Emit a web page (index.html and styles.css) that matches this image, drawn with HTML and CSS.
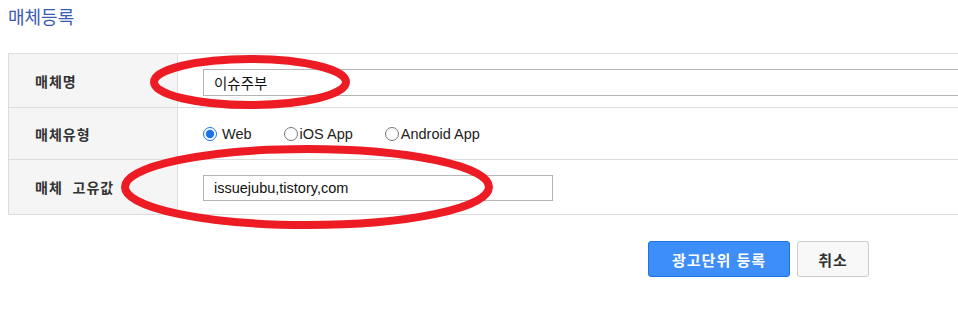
FILE: index.html
```html
<!DOCTYPE html>
<html>
<head>
    <meta charset="utf-8">
    <title>매체등록</title>
    <link rel="stylesheet" href="styles.css">
</head>
<body>
    <div class="page">
        <h2 class="page-title">매체등록</h2>

        <table class="form-table">
            <colgroup>
                <col class="col-label">
                <col>
            </colgroup>
            <tr class="row-name">
                <th>매체명</th>
                <td><input class="input-wide" type="text" value="이슈주부"></td>
            </tr>
            <tr class="row-type">
                <th>매체유형</th>
                <td>
                    <div class="radio-group">
                        <label class="radio-item"><input type="radio" name="media-type" checked>Web</label>
                        <label class="radio-item"><input type="radio" name="media-type">iOS App</label>
                        <label class="radio-item"><input type="radio" name="media-type">Android App</label>
                    </div>
                </td>
            </tr>
            <tr class="row-key">
                <th>매체&nbsp;&nbsp;고유값</th>
                <td><input class="input-mid" type="text" value="issuejubu,tistory,com"></td>
            </tr>
        </table>

        <div class="form-actions">
            <button class="btn btn-primary">광고단위 등록</button>
            <button class="btn btn-cancel">취소</button>
        </div>

        <!-- 빨간 표시 (주석) -->
        <svg class="marks" width="958" height="321" viewBox="0 0 958 321">
            <ellipse cx="250" cy="82" rx="96" ry="23" fill="none" stroke="#ed1c24" stroke-width="8"/>
            <ellipse cx="307" cy="187" rx="182" ry="38" fill="none" stroke="#ed1c24" stroke-width="8"/>
        </svg>
    </div>
</body>
</html>
```

FILE: styles.css
```css
body {
    margin: 0;
    padding: 0;
    background: #fff;
    color: #333;
    font-family: "Liberation Sans", "Noto Sans CJK KR", sans-serif;
    font-size: 14px;
    overflow: hidden;
}
.page {
    position: relative;
    width: 958px;
    height: 321px;
    padding: 8px 0 0 8px;
    box-sizing: border-box;
}
.page-title {
    margin: 0;
    font-size: 18px;
    line-height: 20px;
    font-weight: normal;
    color: #3a5cb4;
}
.form-table {
    margin-top: 25px;
    width: 990px;
    border-collapse: collapse;
    table-layout: fixed;
}
.col-label {
    width: 169px;
}
.form-table th,
.form-table td {
    border: 1px solid #ddd;
    padding: 0;
}
.form-table th {
    padding-left: 26px;
    background: #f5f5f5;
    text-align: left;
    white-space: nowrap;
    font-size: 14px;
    font-weight: bold;
    letter-spacing: 1px;
    color: #333;
}
.form-table td {
    padding-left: 25px;
}
.row-name { height: 54px; }
.row-name td { padding-top: 3px; }
.row-type { height: 52px; }
.row-key { height: 55px; }
.row-key td { padding-top: 2px; }

.input-wide,
.input-mid {
    box-sizing: border-box;
    border: 1px solid #b5b5b5;
    font-family: "Liberation Sans", "Noto Sans CJK KR", sans-serif;
    font-size: 14.5px;
    color: #111;
    padding: 0 10px;
    outline: none;
    display: block;
}
.input-wide {
    width: 100%;
    height: 27px;
}
.input-mid {
    width: 350px;
    height: 26px;
}
.radio-group {
    display: flex;
    gap: 32px;
    align-items: center;
    padding-top: 1px;
}
.radio-item {
    display: flex;
    align-items: center;
    font-size: 14.5px;
    color: #222;
}
.radio-item input {
    margin: 0 5px 0 0;
    width: 14px;
    height: 14px;
    accent-color: #1a73e8;
}
.radio-item + .radio-item input {
    margin-right: 2px;
}
.form-actions {
    display: flex;
    gap: 7px;
    margin-top: 26px;
    padding-left: 640px;
}
.btn {
    height: 36px;
    border-radius: 3px;
    font-family: "Liberation Sans", "Noto Sans CJK KR", sans-serif;
    font-size: 15px;
    font-weight: bold;
    letter-spacing: 1px;
    cursor: pointer;
}
.btn-primary {
    width: 142px;
    background: #3d8ef8;
    border: 1px solid #1a73e8;
    color: #fff;
}
.btn-cancel {
    width: 72px;
    background: #f8f8f8;
    border: 1px solid #ccc;
    color: #333;
}
.marks {
    position: absolute;
    left: 0;
    top: 0;
    pointer-events: none;
}
```
